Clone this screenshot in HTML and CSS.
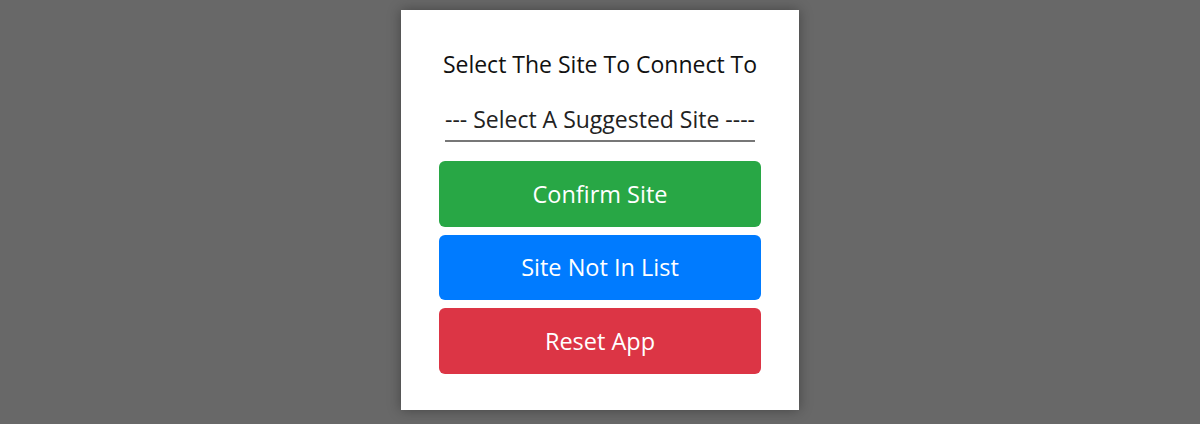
FILE: index.html
```html
<!DOCTYPE html>
<html lang="en">
<head>
  <meta charset="UTF-8">
  <meta name="viewport" content="width=device-width, initial-scale=1.0">
  <title>Select Site</title>
  <link rel="stylesheet" href="styles.css">
</head>
<body>
  <div class="site-modal">
    <h2 class="site-title">Select The Site To Connect To</h2>

    <select id="site-select" class="site-select">
      <option value="">--- Select A Suggested Site ----</option>
    </select>

    <div class="site-actions">
      <button type="button" class="btn btn-confirm">Confirm Site</button>
      <button type="button" class="btn btn-manual">Site Not In List</button>
      <button type="button" class="btn btn-reset">Reset App</button>
    </div>
  </div>
</body>
</html>
```

FILE: styles.css
```css
body {
  font-family: "Open Sans", Arial, sans-serif;
  background-color: #686868;
  margin: 0;
  padding: 10px 0 0;
  height: 100vh;
  box-sizing: border-box;
  display: flex;
  flex-direction: column;
  align-items: center;
}

.site-modal {
  width: 398px;
  height: 400px;
  box-sizing: border-box;
  background-color: #ffffff;
  padding: 38px 38px 0;
  box-shadow: 0 0 12px rgba(0, 0, 0, 0.35);
  display: flex;
  flex-direction: column;
  align-items: center;
}

.site-title {
  margin: 0;
  font-size: 23px;
  font-weight: 400;
  line-height: 32px;
  color: #111111;
}

.site-select {
  -webkit-appearance: none;
  appearance: none;
  width: 310px;
  height: 44px;
  margin-top: 18px;
  padding: 0;
  font-family: inherit;
  font-size: 23px;
  color: #222222;
  text-align: center;
  text-align-last: center;
  background: transparent;
  border: none;
  border-bottom: 2px solid #777777;
  border-radius: 0;
  outline: none;
}

.site-actions {
  width: 100%;
  margin-top: 19px;
  display: flex;
  flex-direction: column;
  gap: 8px;
}

.btn {
  height: 65.5px;
  font-family: inherit;
  font-size: 23.5px;
  color: #ffffff;
  border: none;
  border-radius: 6px;
  cursor: pointer;
}

.btn-confirm {
  background-color: #28a745;
}

.btn-manual {
  background-color: #007bff;
}

.btn-reset {
  background-color: #dc3545;
}
```
